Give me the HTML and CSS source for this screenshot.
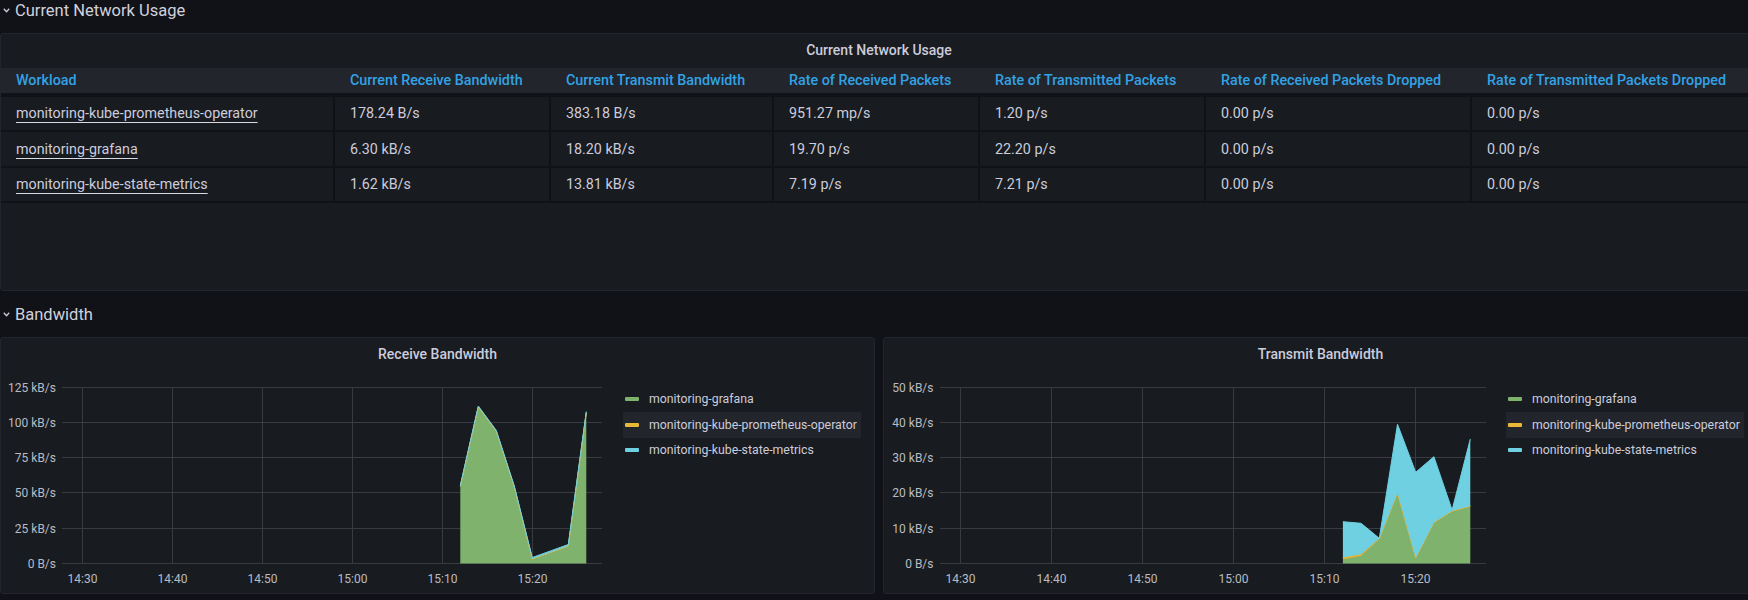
FILE: index.html
```html
<!DOCTYPE html>
<html lang="en">
<head>
<meta charset="utf-8">
<title>Network Usage</title>
<link rel="stylesheet" href="styles.css">
</head>
<body>
<div class="dashboard">
  <div class="row-header first">
    <svg class="chevron" width="7" height="5" viewBox="0 0 7 5"><polyline points="0.8,0.8 3.5,3.8 6.2,0.8"/></svg>
    <span>Current Network Usage</span>
  </div>

  <section class="panel table-panel">
    <header class="panel-title">Current Network Usage</header>
    <div class="table">
      <div class="tr head">
        <div class="th">Workload</div>
        <div class="th">Current Receive Bandwidth</div>
        <div class="th">Current Transmit Bandwidth</div>
        <div class="th">Rate of Received Packets</div>
        <div class="th">Rate of Transmitted Packets</div>
        <div class="th">Rate of Received Packets Dropped</div>
        <div class="th">Rate of Transmitted Packets Dropped</div>
      </div>
      <div class="tr">
        <div class="td"><a class="link">monitoring-kube-prometheus-operator</a></div>
        <div class="td">178.24 B/s</div>
        <div class="td">383.18 B/s</div>
        <div class="td">951.27 mp/s</div>
        <div class="td">1.20 p/s</div>
        <div class="td">0.00 p/s</div>
        <div class="td">0.00 p/s</div>
      </div>
      <div class="tr">
        <div class="td"><a class="link">monitoring-grafana</a></div>
        <div class="td">6.30 kB/s</div>
        <div class="td">18.20 kB/s</div>
        <div class="td">19.70 p/s</div>
        <div class="td">22.20 p/s</div>
        <div class="td">0.00 p/s</div>
        <div class="td">0.00 p/s</div>
      </div>
      <div class="tr">
        <div class="td"><a class="link">monitoring-kube-state-metrics</a></div>
        <div class="td">1.62 kB/s</div>
        <div class="td">13.81 kB/s</div>
        <div class="td">7.19 p/s</div>
        <div class="td">7.21 p/s</div>
        <div class="td">0.00 p/s</div>
        <div class="td">0.00 p/s</div>
      </div>
    </div>
  </section>

  <div class="row-header">
    <svg class="chevron" width="7" height="5" viewBox="0 0 7 5"><polyline points="0.8,0.8 3.5,3.8 6.2,0.8"/></svg>
    <span>Bandwidth</span>
  </div>

  <div class="panel-grid">
    <section class="panel graph-panel">
      <header class="panel-title">Receive Bandwidth</header>
      <div class="graph-body">
        <svg class="plot" width="615" height="221" viewBox="0 0 615 221">
          <g class="grid">
            <line x1="61" y1="15.5" x2="601" y2="15.5"/>
            <line x1="61" y1="50.5" x2="601" y2="50.5"/>
            <line x1="61" y1="85.5" x2="601" y2="85.5"/>
            <line x1="61" y1="120.5" x2="601" y2="120.5"/>
            <line x1="61" y1="156.5" x2="601" y2="156.5"/>
            <line x1="61" y1="191.5" x2="601" y2="191.5"/>
            <line x1="81.5" y1="15.5" x2="81.5" y2="191.5"/>
            <line x1="171.5" y1="15.5" x2="171.5" y2="191.5"/>
            <line x1="261.5" y1="15.5" x2="261.5" y2="191.5"/>
            <line x1="351.5" y1="15.5" x2="351.5" y2="191.5"/>
            <line x1="441.5" y1="15.5" x2="441.5" y2="191.5"/>
            <line x1="531.5" y1="15.5" x2="531.5" y2="191.5"/>
          </g>
          <g class="ylabels">
            <text x="55" y="19.7">125 kB/s</text>
            <text x="55" y="54.7">100 kB/s</text>
            <text x="55" y="89.7">75 kB/s</text>
            <text x="55" y="124.7">50 kB/s</text>
            <text x="55" y="160.7">25 kB/s</text>
            <text x="55" y="195.7">0 B/s</text>
          </g>
          <g class="xlabels">
            <text x="81.5" y="210.5">14:30</text>
            <text x="171.5" y="210.5">14:40</text>
            <text x="261.5" y="210.5">14:50</text>
            <text x="351.5" y="210.5">15:00</text>
            <text x="441.5" y="210.5">15:10</text>
            <text x="531.5" y="210.5">15:20</text>
          </g>
          <path class="fill-green" d="M459.3 191.5 L459.3 114.7 L477.3 35.3 L495.3 59.7 L513.3 115.3 L531.3 187.5 L549.3 181 L567.3 174.5 L585.3 40.8 L585.3 191.5 Z"/>
          <polyline class="line-green" points="459.3,114.7 477.3,35.3 495.3,59.7 513.3,115.3 531.3,187.5 549.3,181 567.3,174.5 585.3,40.8"/>
          <path class="fill-yellow" d="M459.3 114.2 L477.3 34.8 L495.3 59.2 L513.3 114.8 L531.3 187 L549.3 180.5 L567.3 174 L585.3 40.3 L585.3 40.8 L567.3 174.5 L549.3 181 L531.3 187.5 L513.3 115.3 L495.3 59.7 L477.3 35.3 L459.3 114.7 Z"/>
          <polyline class="line-yellow" points="459.3,114.2 477.3,34.8 495.3,59.2 513.3,114.8 531.3,187 549.3,180.5 567.3,174 585.3,40.3"/>
          <path class="fill-cyan" d="M459.3 113.4 L477.3 34 L495.3 58.4 L513.3 114 L531.3 185.5 L549.3 179 L567.3 172.5 L585.3 39.5 L585.3 40.3 L567.3 174 L549.3 180.5 L531.3 187 L513.3 114.8 L495.3 59.2 L477.3 34.8 L459.3 114.2 Z"/>
          <polyline class="line-cyan" points="459.3,113.4 477.3,34 495.3,58.4 513.3,114 531.3,185.5 549.3,179 567.3,172.5 585.3,39.5"/>
        </svg>
        <ul class="legend">
          <li class="legend-item"><i class="swatch green"></i>monitoring-grafana</li>
          <li class="legend-item active"><i class="swatch yellow"></i>monitoring-kube-prometheus-operator</li>
          <li class="legend-item"><i class="swatch cyan"></i>monitoring-kube-state-metrics</li>
        </ul>
      </div>
    </section>

    <section class="panel graph-panel">
      <header class="panel-title">Transmit Bandwidth</header>
      <div class="graph-body">
        <svg class="plot" width="615" height="221" viewBox="0 0 615 221">
          <g class="grid">
            <line x1="56" y1="15.5" x2="602" y2="15.5"/>
            <line x1="56" y1="50.5" x2="602" y2="50.5"/>
            <line x1="56" y1="85.5" x2="602" y2="85.5"/>
            <line x1="56" y1="120.5" x2="602" y2="120.5"/>
            <line x1="56" y1="156.5" x2="602" y2="156.5"/>
            <line x1="56" y1="191.5" x2="602" y2="191.5"/>
            <line x1="76.5" y1="15.5" x2="76.5" y2="191.5"/>
            <line x1="167.5" y1="15.5" x2="167.5" y2="191.5"/>
            <line x1="258.5" y1="15.5" x2="258.5" y2="191.5"/>
            <line x1="349.5" y1="15.5" x2="349.5" y2="191.5"/>
            <line x1="440.5" y1="15.5" x2="440.5" y2="191.5"/>
            <line x1="531.5" y1="15.5" x2="531.5" y2="191.5"/>
          </g>
          <g class="ylabels">
            <text x="49.5" y="19.7">50 kB/s</text>
            <text x="49.5" y="54.7">40 kB/s</text>
            <text x="49.5" y="89.7">30 kB/s</text>
            <text x="49.5" y="124.7">20 kB/s</text>
            <text x="49.5" y="160.7">10 kB/s</text>
            <text x="49.5" y="195.7">0 B/s</text>
          </g>
          <g class="xlabels">
            <text x="76.5" y="210.5">14:30</text>
            <text x="167.5" y="210.5">14:40</text>
            <text x="258.5" y="210.5">14:50</text>
            <text x="349.5" y="210.5">15:00</text>
            <text x="440.5" y="210.5">15:10</text>
            <text x="531.5" y="210.5">15:20</text>
          </g>
          <path class="fill-green" d="M458.9 191.5 L458.9 187.3 L477.1 184 L495.3 167.3 L513.5 122 L531.7 186.7 L549.9 151.3 L568.1 139.7 L586.3 134.7 L586.3 191.5 Z"/>
          <polyline class="line-green" points="458.9,187.3 477.1,184 495.3,167.3 513.5,122 531.7,186.7 549.9,151.3 568.1,139.7 586.3,134.7"/>
          <path class="fill-yellow" d="M458.9 185.5 L477.1 182.3 L495.3 166.6 L513.5 121.2 L531.7 185.9 L549.9 150.5 L568.1 138.9 L586.3 133.9 L586.3 134.7 L568.1 139.7 L549.9 151.3 L531.7 186.7 L513.5 122 L495.3 167.3 L477.1 184 L458.9 187.3 Z"/>
          <polyline class="line-yellow" points="458.9,185.5 477.1,182.3 495.3,166.6 513.5,121.2 531.7,185.9 549.9,150.5 568.1,138.9 586.3,133.9"/>
          <path class="fill-cyan" d="M458.9 149.7 L477.1 151.3 L495.3 166.3 L513.5 52.3 L531.7 100.3 L549.9 84.7 L568.1 138 L586.3 67 L586.3 133.9 L568.1 138.9 L549.9 150.5 L531.7 185.9 L513.5 121.2 L495.3 166.6 L477.1 182.3 L458.9 185.5 Z"/>
          <polyline class="line-cyan" points="458.9,149.7 477.1,151.3 495.3,166.3 513.5,52.3 531.7,100.3 549.9,84.7 568.1,138 586.3,67"/>
        </svg>
        <ul class="legend">
          <li class="legend-item"><i class="swatch green"></i>monitoring-grafana</li>
          <li class="legend-item active"><i class="swatch yellow"></i>monitoring-kube-prometheus-operator</li>
          <li class="legend-item"><i class="swatch cyan"></i>monitoring-kube-state-metrics</li>
        </ul>
      </div>
    </section>
  </div>
</div>
</body>
</html>
```

FILE: styles.css
```css
html, body {
  margin: 0;
  padding: 0;
  background: #111217;
  overflow: hidden;
}

body {
  font-family: Roboto, "Liberation Sans", sans-serif;
  color: #ccccdc;
}

.dashboard {
  width: 1758px;
}

/* Row headers */
.row-header {
  height: 46px;
  display: flex;
  align-items: center;
  gap: 5px;
  padding-left: 3px;
  box-sizing: border-box;
  font-size: 16.5px;
  color: #d0d1dc;
}

.row-header.first {
  margin-top: -13px;
}

.chevron {
  flex: none;
  fill: none;
  stroke: #ccccdc;
  stroke-width: 1.3;
  margin-top: 1px;
}

/* Panels */
.panel {
  background: #181b1f;
  border: 1px solid #22252b;
  border-radius: 3px;
  box-sizing: border-box;
  overflow: hidden;
}

.panel-title {
  height: 34px;
  padding-bottom: 2px;
  box-sizing: border-box;
  display: flex;
  align-items: center;
  justify-content: center;
  font-size: 14px;
  font-weight: 500;
  color: #ccccdc;
}

.table-panel {
  height: 258px;
}

/* Table */
.tr {
  display: grid;
  grid-template-columns: 334px 216px 223px 206px 226px 266px 1fr;
  font-size: 14.3px;
}

.tr.head {
  height: 24.5px;
  background: #22252b;
  border-bottom: 4px solid #111217;
}

.th {
  display: flex;
  align-items: center;
  padding-left: 15px;
  color: #33a2e5;
  font-weight: 500;
  white-space: nowrap;
}

.tr:not(.head) {
  height: 33.5px;
  border-bottom: 2px solid #111217;
}

.td {
  display: flex;
  align-items: center;
  padding-left: 15px;
  border-right: 2px solid #111217;
  white-space: nowrap;
  color: #ccccdc;
}

.td:last-child {
  border-right: none;
}

.link {
  color: #ccccdc;
  text-decoration: underline;
  text-decoration-color: #d8d9e2;
  text-decoration-thickness: 1px;
  text-underline-offset: 4px;
}

/* Graph panels */
.panel-grid {
  display: grid;
  grid-template-columns: 1fr 1fr;
  gap: 8px;
  height: 257px;
}

.graph-body {
  display: flex;
}

.plot {
  flex: none;
  display: block;
}

.grid line {
  stroke: #393b41;
  stroke-width: 1;
}

.ylabels text {
  font-family: Roboto, "Liberation Sans", sans-serif;
  font-size: 12px;
  fill: #b9bbc4;
  text-anchor: end;
}

.xlabels text {
  font-family: Roboto, "Liberation Sans", sans-serif;
  font-size: 12px;
  fill: #b9bbc4;
  text-anchor: middle;
}

.fill-green { fill: #7eb26d; }
.fill-yellow { fill: #eab839; }
.fill-cyan { fill: #6ed0e0; }

.line-green, .line-yellow, .line-cyan {
  fill: none;
  stroke-width: 1;
  stroke-linejoin: round;
}
.line-green { stroke: #7eb26d; }
.line-yellow { stroke: #eab839; }
.line-cyan { stroke: #6ed0e0; }

.legend {
  list-style: none;
  margin: 0 0 0 7px;
  padding: 14.7px 0 0 0;
  display: flex;
  flex-direction: column;
  align-items: flex-start;
}

.legend-item {
  height: 25.5px;
  display: flex;
  align-items: center;
  gap: 10px;
  padding: 0 4px 0 2px;
  font-size: 12.3px;
  color: #ccccdc;
  white-space: nowrap;
}

.legend-item.active {
  background: #22252b;
}

.swatch {
  display: block;
  width: 14px;
  height: 4px;
  border-radius: 1px;
}

.swatch.green { background: #7eb26d; }
.swatch.yellow { background: #eab839; }
.swatch.cyan { background: #6ed0e0; }
```
